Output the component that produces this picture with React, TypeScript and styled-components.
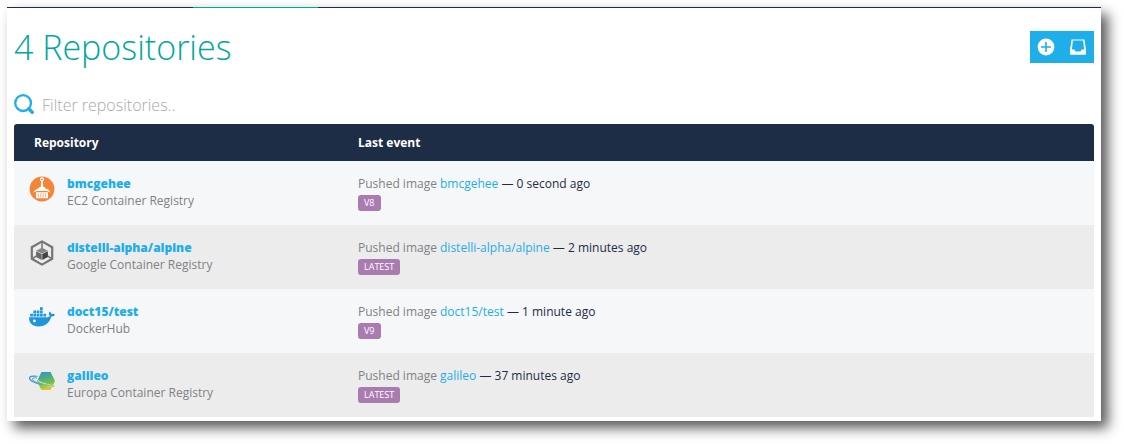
import React from "react";
import styled, { createGlobalStyle } from "styled-components";

const GlobalStyle = createGlobalStyle`
  * { box-sizing: border-box; }
  body {
    margin: 0;
    background: #fff;
    font-family: "Open Sans", "Noto Sans", sans-serif;
    font-size: 12px;
    line-height: 17px;
    color: #1e2d46;
  }
`;

const Page = styled.div`
  padding: 7px 23px 23px 7px;
`;

const Panel = styled.main`
  background: #fff;
  box-shadow: 7px 7px 12px rgba(0, 0, 0, 0.65);
  padding-bottom: 4px;
`;

const TopLine = styled.div`
  height: 1px;
  background: #1e2d46;
`;

const ActiveMark = styled.div`
  width: 125px;
  height: 1px;
  margin-left: 186px;
  background: #00a79d;
`;

const Content = styled.div`
  padding: 0 7px;
`;

const Header = styled.header`
  display: flex;
  justify-content: space-between;
  align-items: center;
  height: 78px;
`;

const Title = styled.h1`
  margin: 0;
  font-size: 34px;
  line-height: 48px;
  font-weight: 300;
  color: #00a79d;
`;

const Actions = styled.div`
  display: flex;
`;

const IconButton = styled.button`
  display: flex;
  align-items: center;
  justify-content: center;
  width: 32px;
  height: 32px;
  padding: 0;
  border: 0;
  background: #1eaeea;
  cursor: pointer;
`;

const Filter = styled.label`
  display: flex;
  align-items: center;
  gap: 8px;
  height: 38px;
`;

const FilterInput = styled.input`
  flex: 1;
  height: 24px;
  padding: 0;
  border: 0;
  outline: 0;
  background: transparent;
  font: 300 16px/24px "Open Sans", "Noto Sans", sans-serif;
  color: #1e2d46;
  &::placeholder { color: #a9a9a9; opacity: 1; }
`;

const Table = styled.table`
  width: 100%;
  table-layout: fixed;
  border-collapse: separate;
  border-spacing: 0;
  border-radius: 3px 3px 0 0;
  overflow: hidden;
`;

const HeadCell = styled.th<{ $width?: string }>`
  width: ${(p) => p.$width ?? "auto"};
  height: 37px;
  padding: 0 20px;
  background: #1e2d46;
  color: #fff;
  font-weight: 700;
  text-align: left;
`;

const Row = styled.tr`
  background: #f5f7f9;
  &:nth-child(even) { background: #ececec; }
`;

const Cell = styled.td<{ $left: number }>`
  height: 64px;
  padding: 14px 0 0 ${(p) => p.$left}px;
  vertical-align: top;
`;

const Repo = styled.div`
  display: flex;
  gap: 12px;
  svg { flex: none; }
`;

const RepoLink = styled.a`
  display: block;
  color: #1eaeea;
  font-weight: 800;
  text-decoration: none;
`;

const Provider = styled.div`
  color: #808284;
`;

const Event = styled.div`
  color: #808284;
`;

const EventLink = styled.a`
  color: #1eaeea;
  text-decoration: none;
`;

const When = styled.span`
  color: #1e2d46;
`;

const Tag = styled.span`
  display: block;
  width: fit-content;
  margin-top: 3px;
  padding: 0 6px;
  border-radius: 3px;
  background: #a97bb1;
  color: #fff;
  font-size: 9px;
  line-height: 16px;
`;

const SearchIcon = () => (
  <svg width="20" height="22" viewBox="0 0 20 22" fill="none" stroke="#1eaeea" aria-hidden="true">
    <circle cx="9.100" cy="9.100" r="7.900" strokeWidth="2.300" />
    <path d="M14.800 14.800 18.200 18.200" strokeWidth="3.400" strokeLinecap="round" />
  </svg>
);

const PlusIcon = () => (
  <svg width="18" height="18" viewBox="0 0 18 18" aria-hidden="true">
    <circle cx="9" cy="9" r="8.4" fill="#fff" />
    <path d="M9 4v10M4 9h10" stroke="#1eaeea" strokeWidth="1.6" />
  </svg>
);

const InboxIcon = () => (
  <svg width="16" height="16" viewBox="0 0 16 16" aria-hidden="true">
    <path
      fill="#fff"
      fillRule="evenodd"
      d="M1.500.400h13L16 11v3.800a.900.900 0 0 1-.900.900H.900a.900.900 0 0 1-.900-.900V11ZM2.900 1.600 1.900 10.600h2.500l1.100 2h5l1.100-2h2.500L13.100 1.600Z"
    />
  </svg>
);

const Ec2Icon = () => (
  <svg width="26" height="28" viewBox="0 0 26 28" aria-hidden="true">
    <circle cx="13" cy="14" r="12.4" fill="#f58536" />
    <circle cx="13" cy="4.300" r="1.500" fill="none" stroke="#fff" strokeWidth="1.200" />
    <path d="M12.200 5.800h1.600l.5 7h-2.600Z" fill="#fff" />
    <path d="M10.400 12h5.200c.3 1.100 1.300 1.700 2.700 2.200 1.500.6 2.600 1.800 3.200 3.500-1.400-1.100-2.700-1.600-4.100-1.700H8.600c-1.400.1-2.700.6-4.100 1.700.6-1.700 1.700-2.900 3.200-3.500 1.400-.5 2.400-1.100 2.700-2.200Z" fill="#fff" />
    <path d="M7 17.300h12V23.200H7Z" fill="#fff" />
    <path d="M9.300 18.200v4M11.800 18.200v4M14.200 18.200v4M16.700 18.200v4" stroke="#f58536" strokeWidth=".700" />
  </svg>
);

const GoogleIcon = () => (
  <svg width="26" height="28" viewBox="0 0 26 28" aria-hidden="true">
    <path d="M13 2.400 23.200 8.200v11.600L13 25.600 2.800 19.800V8.200Z" fill="none" stroke="#757575" strokeWidth="2.200" />
    <path d="M13 3v7M7.500 17 3.500 19.400M18.500 17l4 2.400" stroke="#757575" strokeWidth="1.500" />
    <path d="m13 8.800 5.900 2.900L13 14.500l-5.900-2.800Z" fill="#858585" />
    <path d="m7.100 12.200 5.600 2.800v6.100l-5.600-3.200Z" fill="#686868" />
    <path d="m18.900 12.200-5.600 2.800v6.100l5.600-3.200Z" fill="#424242" />
  </svg>
);

const DockerIcon = () => (
  <svg width="26" height="28" viewBox="0 -1.500 26 28" aria-hidden="true">
    <path
      fill="#1d96dc"
      d="M0 12.800h18.700c1.300 0 2-.700 2-1.700-1-1.200-1.100-2.800-.200-4.100 1 .600 1.700 1.400 1.900 2.400 1.200-.300 2.500-.200 3.600.500-.600 1.400-2 2-3.700 2.100C20.500 18.200 16.200 22 9.700 22 3.100 22 0 18.600 0 12.800Z"
    />
    <circle cx="5.400" cy="16.400" r="1.400" fill="#f5f7f9" />
    <path
      fill="#1d96dc"
      d="M1.200 9.300h2.700v2.700H1.200Zm3.200 0h2.700v2.700H4.400Zm3.300 0h2.700v2.700H7.700Zm3.300 0h2.700v2.700H11Zm3.400 0h2.700v2.700h-2.700ZM4.400 6h2.700v2.700H4.400Zm3.300 0h2.700v2.700H7.700ZM11 6h2.700v2.700H11Zm0-3.300h2.700v2.700H11Z"
    />
  </svg>
);

const EuropaIcon = () => (
  <svg width="26" height="28" viewBox="0 0 26 28" aria-hidden="true">
    <defs>
      <linearGradient id="planet" x1="0.3" y1="0" x2="0.5" y2="1">
        <stop offset="0" stopColor="#3694d2" />
        <stop offset=".45" stopColor="#56b568" />
        <stop offset=".75" stopColor="#8fc14a" />
        <stop offset="1" stopColor="#f8c51c" />
      </linearGradient>
      <linearGradient id="ring" x1="0" y1="0" x2="1" y2="0">
        <stop offset="0" stopColor="#2c8fd3" />
        <stop offset=".5" stopColor="#60b78c" />
        <stop offset="1" stopColor="#a4c961" />
      </linearGradient>
    </defs>
    <path d="M12.400 5h9.200l4.400 9-4.400 9h-9.200L8 14Z" fill="url(#planet)" />
    <g fill="none">
      <path
        d="M8 12c1.500 3 8 5.400 16.500 6.700M8 14.600c3 2.600 8.500 4.400 15.500 5.300"
        stroke="#ececec"
        strokeWidth=".900"
      />
      <path
        d="M8.500 9.300C3.500 8.700-.300 9.300.700 11.800c1.200 3.200 10.300 6.600 24.800 7.400"
        stroke="url(#ring)"
        strokeWidth="1.200"
      />
      <path
        d="M8 11c-3-.400-4.900.100-4.500 1.400.900 2.100 7.500 4.600 16.500 5.800"
        stroke="url(#ring)"
        strokeWidth=".900"
      />
    </g>
  </svg>
);

const repos = [
  { name: "bmcgehee", provider: "EC2 Container Registry", when: "0 second ago", tag: "V8", Icon: Ec2Icon },
  { name: "distelli-alpha/alpine", provider: "Google Container Registry", when: "2 minutes ago", tag: "LATEST", Icon: GoogleIcon },
  { name: "doct15/test", provider: "DockerHub", when: "1 minute ago", tag: "V9", Icon: DockerIcon },
  { name: "galileo", provider: "Europa Container Registry", when: "37 minutes ago", tag: "LATEST", Icon: EuropaIcon },
];

export default function App() {
  return (
    <Page>
      <GlobalStyle />
      <Panel>
        <TopLine>
          <ActiveMark />
        </TopLine>
        <Content>
          <Header>
            <Title>4 Repositories</Title>
            <Actions>
              <IconButton type="button" aria-label="Add repository">
                <PlusIcon />
              </IconButton>
              <IconButton type="button" aria-label="Inbox">
                <InboxIcon />
              </IconButton>
            </Actions>
          </Header>
          <Filter>
            <SearchIcon />
            <FilterInput type="text" placeholder="Filter repositories.." aria-label="Filter repositories" />
          </Filter>
          <Table>
            <thead>
              <tr>
                <HeadCell $width="30%">Repository</HeadCell>
                <HeadCell>Last event</HeadCell>
              </tr>
            </thead>
            <tbody>
              {repos.map(({ name, provider, when, tag, Icon }) => (
                <Row key={name}>
                  <Cell $left={15}>
                    <Repo>
                      <Icon />
                      <div>
                        <RepoLink href="#">{name}</RepoLink>
                        <Provider>{provider}</Provider>
                      </div>
                    </Repo>
                  </Cell>
                  <Cell $left={20}>
                    <Event>
                      Pushed image <EventLink href="#">{name}</EventLink> <When>— {when}</When>
                    </Event>
                    <Tag>{tag}</Tag>
                  </Cell>
                </Row>
              ))}
            </tbody>
          </Table>
        </Content>
      </Panel>
    </Page>
  );
}
